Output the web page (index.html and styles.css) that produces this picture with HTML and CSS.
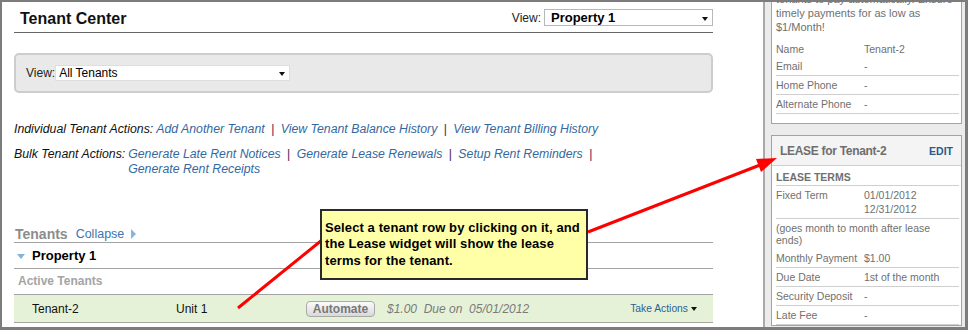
FILE: index.html
```html
<!DOCTYPE html>
<html lang="en">
<head>
<meta charset="UTF-8" />
<title>Tenant Center</title>
<link rel="stylesheet" href="styles.css">
</head>
<body>
  <div class="frame">
    <div class="main">
      <div class="page-head">
        <h1>Tenant Center</h1>
        <div class="view-pick">
          <span>View:</span>
          <div class="select select-prop">Property 1<i class="caret"></i></div>
        </div>
      </div>

      <div class="filter-box">
        <span>View:</span>
        <div class="select select-filter">All Tenants<i class="caret"></i></div>
      </div>

      <div class="actions">
        <div class="action-row">
          <span class="action-label">Individual Tenant Actions:</span>
          <span class="action-links"><a href="#">Add Another Tenant</a> <span class="sep">|</span> <a href="#">View Tenant Balance History</a> <span class="sep">|</span> <a href="#">View Tenant Billing History</a></span>
        </div>
        <div class="action-row">
          <span class="action-label">Bulk Tenant Actions:</span>
          <span class="action-links"><a href="#">Generate Late Rent Notices</a> <span class="sep">|</span> <a href="#">Generate Lease Renewals</a> <span class="sep">|</span> <a href="#">Setup Rent Reminders</a> <span class="sep">|</span> <a href="#">Generate Rent Receipts</a></span>
        </div>
      </div>

      <div class="tenants">
        <div class="tenants-head">
          <span class="tenants-title">Tenants</span>
          <a href="#" class="collapse">Collapse</a>
          <i class="tri-right"></i>
        </div>
        <div class="prop-row"><i class="tri-down"></i>Property 1</div>
        <div class="group-row">Active Tenants</div>
        <div class="tenant-row">
          <span class="t-name">Tenant-2</span>
          <span class="t-unit">Unit 1</span>
          <button class="btn-automate">Automate</button>
          <span class="t-due">$1.00&nbsp; Due on&nbsp; 05/01/2012</span>
          <a href="#" class="take-actions">Take Actions<i class="caret-sm"></i></a>
        </div>
      </div>
    </div>

    <aside class="sidebar">
      <div class="widget widget-tenant">
        <p class="promo">tenants to pay automatically. Ensure<br>timely payments for as low as<br>$1/Month!</p>
        <div class="kv kv-first"><span class="k">Name</span><span>Tenant-2</span></div>
        <div class="kv"><span class="k">Email</span><span>-</span></div>
        <div class="kv"><span class="k">Home Phone</span><span>-</span></div>
        <div class="kv"><span class="k">Alternate Phone</span><span>-</span></div>
      </div>

      <div class="widget widget-lease">
        <div class="widget-head">
          <span class="widget-title">LEASE for Tenant-2</span>
          <a href="#" class="edit">EDIT</a>
        </div>
        <div class="widget-body">
          <div class="terms-head">LEASE TERMS</div>
          <div class="kv"><span class="k">Fixed Term</span><span>01/01/2012<br>12/31/2012</span></div>
          <div class="note">(goes month to month after lease<br>ends)</div>
          <div class="kv"><span class="k">Monthly Payment</span><span>$1.00</span></div>
          <div class="kv"><span class="k">Due Date</span><span>1st of the month</span></div>
          <div class="kv"><span class="k">Security Deposit</span><span>-</span></div>
          <div class="kv"><span class="k">Late Fee</span><span>-</span></div>
        </div>
      </div>
    </aside>

    <!-- annotation overlay -->
    <svg class="arrows" width="968" height="330" viewBox="0 0 968 330">
      <line x1="238" y1="308" x2="322" y2="240" stroke="#f00" stroke-width="3" />
      <line x1="588" y1="232" x2="760" y2="165" stroke="#f00" stroke-width="3" />
      <polygon points="777,158 756,159 761,172" fill="#f00" />
    </svg>
    <div class="callout">
      <p>Select a tenant row by clicking on it, and<br>the Lease widget will show the lease<br>terms for the tenant.</p>
    </div>
  </div>
</body>
</html>
```

FILE: styles.css
```css
body {
  margin: 0;
  font-family: "Liberation Sans", Arial, sans-serif;
  font-size: 12px;
  color: #222;
}

.frame {
  position: relative;
  display: flex;
  width: 968px;
  height: 330px;
  box-sizing: border-box;
  border: 2px solid #7c7c7c;
  border-right-width: 3px;
  border-bottom-width: 3px;
  overflow: hidden;
  background: #fff;
}

/* main column */
.main {
  width: 761px;
  flex-shrink: 0;
  box-sizing: border-box;
  padding: 7px 50px 0 12px;
}

.page-head {
  display: flex;
  justify-content: space-between;
  align-items: flex-start;
  padding-bottom: 3px;
  border-bottom: 1px solid #666;
}
.page-head h1 {
  margin: 0 0 0 6px;
  font-size: 16px;
  line-height: 20px;
  font-weight: bold;
  color: #111;
}
.view-pick {
  display: flex;
  align-items: center;
  gap: 3px;
  color: #222;
}

.select {
  position: relative;
  box-sizing: border-box;
  background: #fff;
  border: 1px solid #b8b8b8;
  color: #000;
}
.select-prop {
  width: 169px;
  height: 17px;
  padding-left: 6px;
  font-size: 13px;
  font-weight: bold;
  line-height: 15px;
}
.select-filter {
  width: 235px;
  height: 16px;
  padding-left: 3px;
  line-height: 14px;
  border-color: #dedede;
}
.caret {
  position: absolute;
  right: 4px;
  top: 50%;
  margin-top: -1px;
  border-left: 3px solid transparent;
  border-right: 3px solid transparent;
  border-top: 4px solid #111;
}

.filter-box {
  margin-top: 20px;
  display: flex;
  align-items: center;
  padding: 10px;
  border: 2px solid #cdcdcd;
  border-radius: 5px;
  background: #e9e9e9;
  color: #222;
}

.actions {
  margin-top: 29px;
  font-size: 12.3px;
}
.action-row {
  display: flex;
  line-height: 15px;
  font-style: italic;
  color: #111;
}
.action-row + .action-row {
  margin-top: 10px;
}
.action-label {
  margin-right: 3px;
  white-space: nowrap;
}
.action-links a {
  color: #3468a0;
  text-decoration: none;
  white-space: nowrap;
}
.sep {
  margin: 0 3px;
  font-style: normal;
  color: #552255;
}

/* tenants list */
.tenants {
  margin-top: 49px;
}
.tenants-head {
  display: flex;
  align-items: center;
  line-height: 16px;
  border-bottom: 1px solid #a3a3a3;
}
.tenants-title {
  padding-left: 1px;
  font-size: 14px;
  font-weight: bold;
  color: #8c8c8c;
}
.collapse {
  margin-left: 8px;
  font-size: 12.5px;
  color: #3d74ad;
  text-decoration: none;
}
.tri-right {
  margin-left: 7px;
  border-top: 5px solid transparent;
  border-bottom: 5px solid transparent;
  border-left: 5px solid #86b6df;
}
.prop-row {
  display: flex;
  align-items: center;
  padding: 5px 0 4px 3px;
  line-height: 16px;
  font-size: 13px;
  font-weight: bold;
  color: #000;
  border-bottom: 1px solid #a3a3a3;
}
.tri-down {
  margin-right: 7px;
  border-left: 4.5px solid transparent;
  border-right: 4.5px solid transparent;
  border-top: 5px solid #82b3dc;
}
.group-row {
  padding: 5px 0 5px 4px;
  line-height: 15px;
  font-weight: bold;
  color: #a4a4a4;
  border-bottom: 1px solid #a3a3a3;
}
.tenant-row {
  display: flex;
  align-items: center;
  height: 27px;
  padding: 0 16px 0 18px;
  background: #e6f2d8;
  border-bottom: 1px solid #a3a3a3;
  color: #111;
}
.t-name {
  width: 144px;
}
.t-unit {
  width: 130px;
}
.btn-automate {
  width: 69px;
  height: 16px;
  margin-right: 12px;
  padding: 0;
  box-sizing: border-box;
  border: 1px solid #a9a9a9;
  border-radius: 4px;
  background: linear-gradient(#fbfbfb, #d9d9d9);
  font-family: "Liberation Sans", Arial, sans-serif;
  font-size: 12px;
  font-weight: bold;
  line-height: 14px;
  color: #777;
}
.t-due {
  font-style: italic;
  color: #7a7a7a;
}
.take-actions {
  margin-left: auto;
  display: flex;
  align-items: center;
  font-size: 10.3px;
  color: #2c5f95;
  text-decoration: none;
}
.caret-sm {
  margin-left: 3px;
  border-left: 3.5px solid transparent;
  border-right: 3.5px solid transparent;
  border-top: 4px solid #111;
}

/* right sidebar widgets */
.sidebar {
  flex: 1;
  border-left: 2px solid #a9a9a9;
  background: #ebebeb;
  padding: 0 3px 0 6px;
  font-size: 10.5px;
  color: #707070;
  overflow: hidden;
}
.widget {
  background: #fff;
  border: 1px solid #a3a3a3;
}
.widget-tenant {
  margin-top: -15px;
  padding: 4px 2px 9px 4px;
}
.promo {
  margin: 0 0 6px;
  font-size: 11px;
  line-height: 14px;
}
.kv {
  display: flex;
  padding: 2px 0;
  line-height: 14px;
  border-bottom: 1px solid #cfcfcf;
}
.kv-first {
  padding-bottom: 0;
  border-bottom-color: transparent;
}
.kv .k {
  width: 88px;
  flex-shrink: 0;
}

.widget-lease {
  margin-top: 11px;
}
.widget-head {
  display: flex;
  justify-content: space-between;
  align-items: center;
  height: 29px;
  padding: 0 8px;
  background: #f4f4f4;
  border-bottom: 1px solid #cfcfcf;
}
.widget-title {
  font-size: 12px;
  font-weight: bold;
  letter-spacing: -0.3px;
  color: #6e6e6e;
}
.edit {
  font-size: 10.5px;
  font-weight: bold;
  color: #2a5a8c;
  text-decoration: none;
}
.widget-body {
  padding: 0 2px 0 4px;
}
.terms-head {
  padding: 4px 0 1px;
  line-height: 14px;
  font-weight: bold;
  border-bottom: 1px solid #cfcfcf;
}
.note {
  padding: 3px 0;
  line-height: 12px;
}

/* annotation */
.arrows {
  position: absolute;
  left: -2px;
  top: -2px;
  pointer-events: none;
}
.callout {
  position: absolute;
  left: 318px;
  top: 207px;
  width: 268px;
  height: 71px;
  box-sizing: border-box;
  display: flex;
  align-items: center;
  padding: 0 3px;
  border: 2px solid #2a2a2a;
  background: #ffffa8;
  color: #000;
  overflow: hidden;
}
.callout p {
  margin: 0;
  font-size: 13px;
  font-weight: bold;
  letter-spacing: 0.1px;
  line-height: 16.3px;
  white-space: nowrap;
}
```
